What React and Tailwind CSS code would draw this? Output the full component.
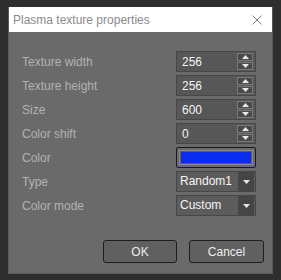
import React from 'react';

const ROWS = [
  { label: 'Texture width', kind: 'spin', value: '256' },
  { label: 'Texture height', kind: 'spin', value: '256' },
  { label: 'Size', kind: 'spin', value: '600' },
  { label: 'Color shift', kind: 'spin', value: '0' },
  { label: 'Color', kind: 'color' },
  { label: 'Type', kind: 'combo', value: 'Random1' },
  { label: 'Color mode', kind: 'combo', value: 'Custom' },
];

const Up = () => (
  <svg width="7" height="4" viewBox="0 0 7 4"><path d="M3.5 0L7 4H0z" fill="#e8e8e8" /></svg>
);
const Down = () => (
  <svg width="7" height="4" viewBox="0 0 7 4"><path d="M0 0h7L3.5 4z" fill="#e8e8e8" /></svg>
);

function SpinBox({ value }) {
  return (
    <div className="w-[80px] h-[21px] border border-[#474747] bg-[#575757] flex items-center pl-[5px] pr-[2px]">
      <span className="flex-1 text-[#f4f4f4] text-[12px]">{value}</span>
      <div className="flex flex-col gap-[1px]">
        <div className="w-[16px] h-[8px] border border-[#7a7a7a] bg-[#4a4a4a] flex items-center justify-center"><Up /></div>
        <div className="w-[16px] h-[8px] border border-[#7a7a7a] bg-[#4a4a4a] flex items-center justify-center"><Down /></div>
      </div>
    </div>
  );
}

function ColorBox() {
  return (
    <div className="w-[80px] h-[21px] rounded-[2px] border border-[#1a1a1a] bg-[#6a6a6a] p-[2px]">
      <div className="w-full h-full border border-[#8a8a8a] bg-[#5c5c5c] p-[1px]">
        <div className="w-full h-full bg-[#0a2df0]" />
      </div>
    </div>
  );
}

function Combo({ value }) {
  return (
    <div className="w-[80px] h-[21px] border border-[#474747] bg-[#5c5c5c] flex items-stretch">
      <span className="flex-1 text-[#f4f4f4] text-[12px] pl-[3px] leading-[19px]">{value}</span>
      <div className="w-[16px] mr-[1px] bg-[#454545] flex items-center justify-center"><Down /></div>
    </div>
  );
}

export default function App() {
  return (
    <div className="w-[281px] h-[280px] bg-[#2e2e2e] pt-[7px] pl-[8px]" style={{ fontFamily: '"Liberation Sans", Arial, sans-serif' }}>
      <div className="w-[265px] h-[267px] flex flex-col border-x border-b border-[#5a5a5a]">
        {/* title bar */}
        <div className="h-[25px] bg-white flex items-center justify-between pl-[4px] pr-[10px]">
          <span className="text-[12px] text-[#8a8a8a]">Plasma texture properties</span>
          <svg width="10" height="10" viewBox="0 0 10 10"><path d="M0.5 0.5l9 9M9.5 0.5l-9 9" stroke="#808080" strokeWidth="1" /></svg>
        </div>

        {/* body */}
        <div className="flex-1 bg-[#6a6a6a] pt-[19px] pl-[13px] pr-[16px] flex flex-col">
          <div className="flex flex-col gap-[3px]">
            {ROWS.map((r) => (
              <div key={r.label} className="flex items-center justify-between h-[21px]">
                <span className="text-[12px] text-[#b2b2b2]">{r.label}</span>
                {r.kind === 'spin' && <SpinBox value={r.value} />}
                {r.kind === 'color' && <ColorBox />}
                {r.kind === 'combo' && <Combo value={r.value} />}
              </div>
            ))}
          </div>

          <div className="flex justify-end gap-[12px] mt-[24px] -mr-[8px]">
            <button className="w-[74px] h-[23px] rounded-[3px] border border-[#1e1e1e] bg-[#606060] text-[12px] text-[#ececec]">OK</button>
            <button className="w-[75px] h-[23px] rounded-[3px] border border-[#1e1e1e] bg-[#606060] text-[12px] text-[#ececec]">Cancel</button>
          </div>
        </div>
      </div>
    </div>
  );
}
